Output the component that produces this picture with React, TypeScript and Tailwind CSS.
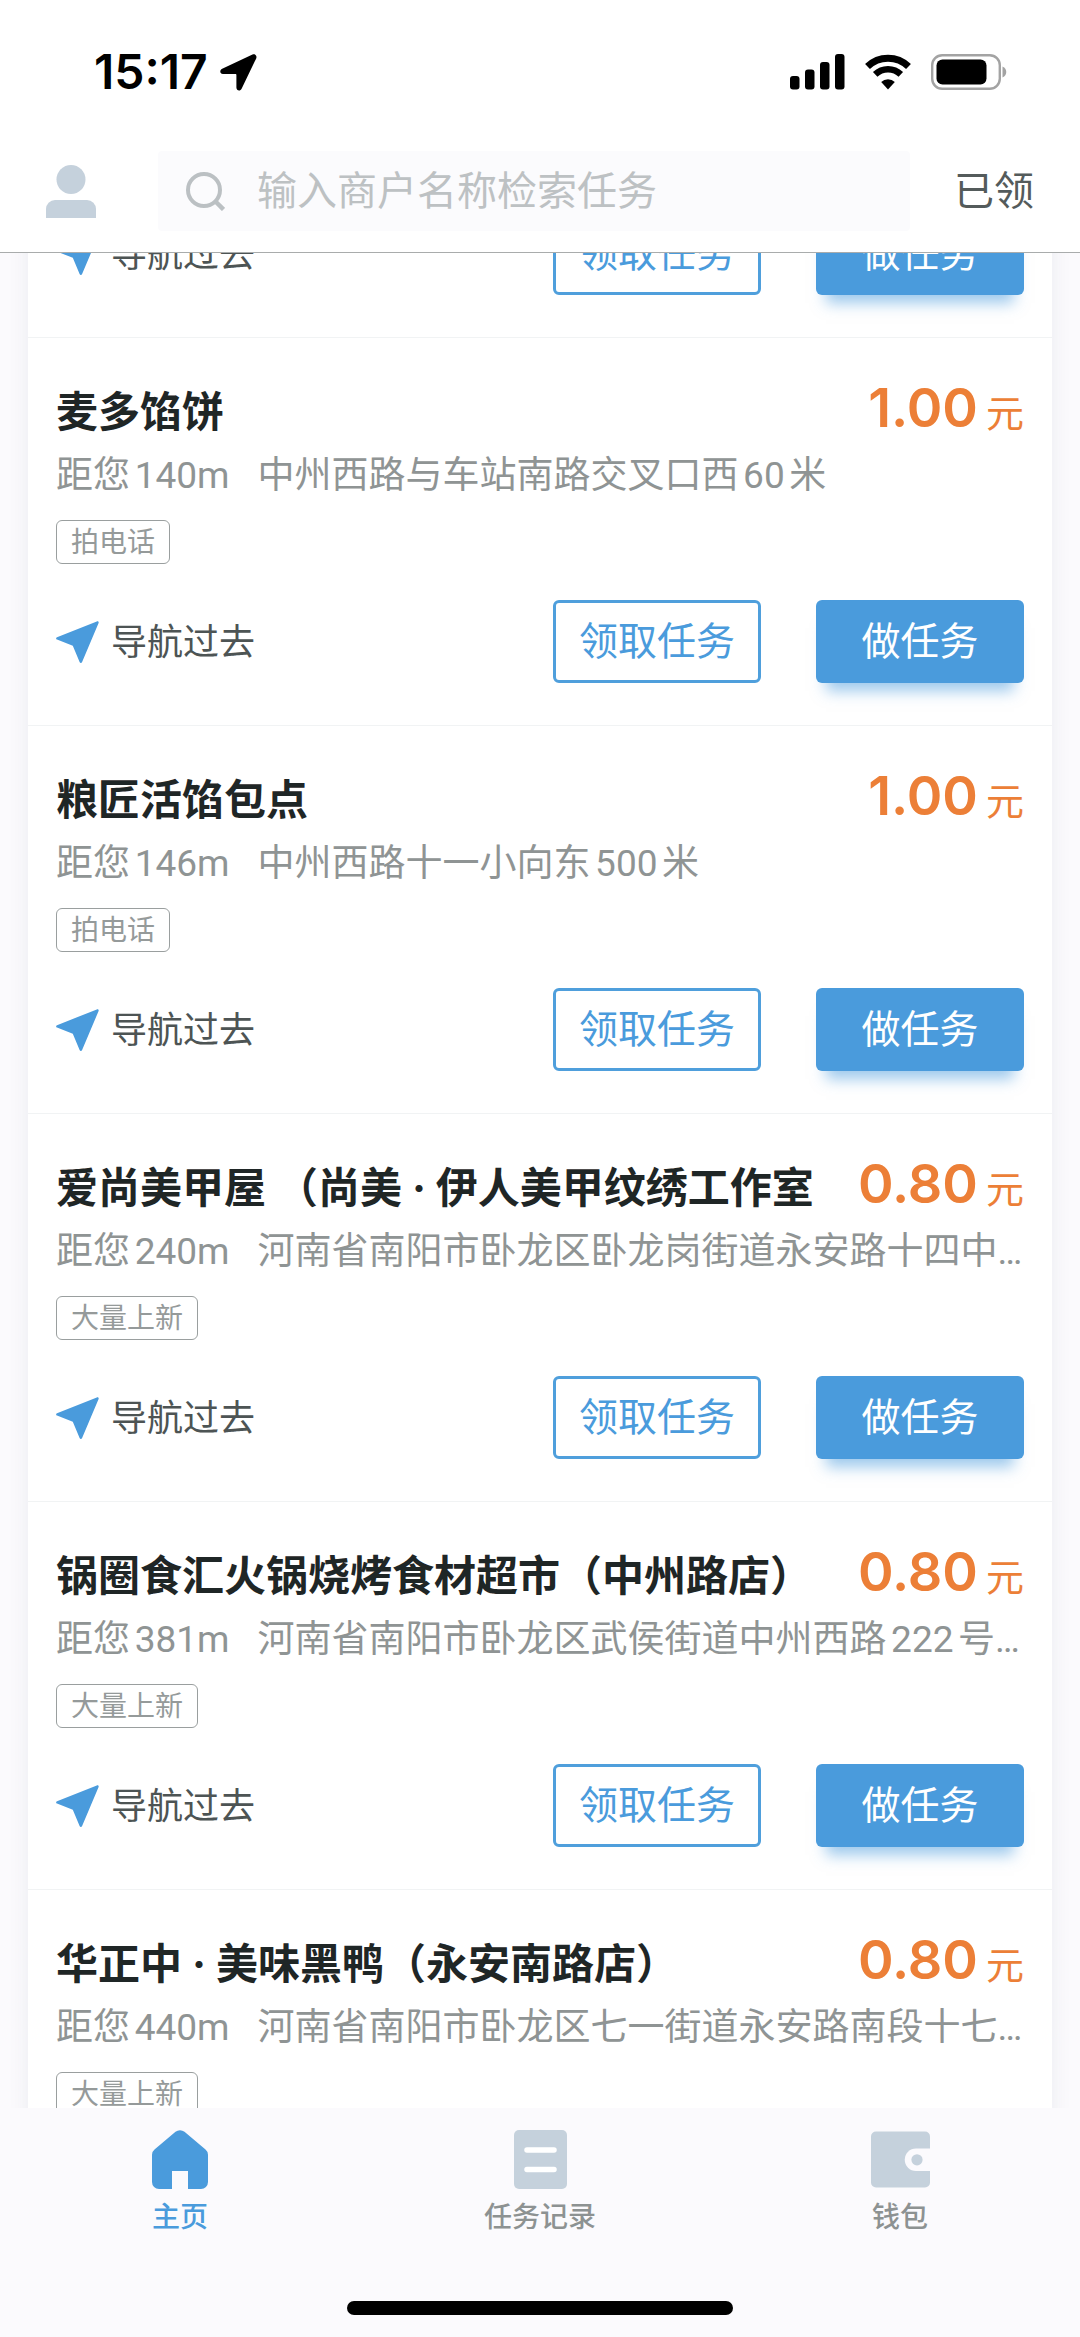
type Task = {
    name: string;
    price: string;
    distance: string;
    address: string;
    tag: string;
};

const tasks: Task[] = [
    { name: "麦多馅饼", price: "1.00", distance: "140m", address: "中州西路与车站南路交叉口西60米", tag: "拍电话" },
    { name: "粮匠活馅包点", price: "1.00", distance: "146m", address: "中州西路十一小向东500米", tag: "拍电话" },
    { name: "爱尚美甲屋 （尚美 · 伊人美甲纹绣工作室", price: "0.80", distance: "240m", address: "河南省南阳市卧龙区卧龙岗街道永安路十四中…", tag: "大量上新" },
    { name: "锅圈食汇火锅烧烤食材超市（中州路店）", price: "0.80", distance: "381m", address: "河南省南阳市卧龙区武侯街道中州西路222号…", tag: "大量上新" },
    { name: "华正中 · 美味黑鸭（永安南路店）", price: "0.80", distance: "440m", address: "河南省南阳市卧龙区七一街道永安路南段十七…", tag: "大量上新" },
];

function StatusBar() {
    return (
        <div className="flex items-center justify-between h-36 pl-[94px] pr-[73px] text-black">
            <div className="flex items-center gap-3">
                <span className="text-[48px] leading-none font-semibold">15:17</span>
                <svg width="37" height="37" viewBox="0 0 37 37" fill="currentColor">
                    <path d="M32.5.6 2.2 14.8C-.8 16.2-.1 20 3 20h12.4c.7 0 1 .3 1 1v12.6c0 3.300 3.900 4 5.200 1.200L36.200 4.400C37.300 1.900 35-.5 32.500.6Z" />
                </svg>
            </div>
            <div className="flex items-center gap-5">
                <svg width="55" height="36" viewBox="0 0 55 36" fill="currentColor">
                    <rect x="0" y="22" width="9.500" height="13.500" rx="3" />
                    <rect x="15" y="15.500" width="9.500" height="20" rx="3" />
                    <rect x="30" y="8" width="9.500" height="27.500" rx="3" />
                    <rect x="45" y="0" width="9.500" height="35.500" rx="3" />
                </svg>
                <svg width="46" height="36" viewBox="0 0 46 36" fill="none" stroke="currentColor" strokeWidth="7">
                    <path d="M2.500 12.500a29.500 29.500 0 0 1 41 0" />
                    <path d="M10.200 20.300a18.500 18.500 0 0 1 25.600 0" strokeWidth="6.500" />
                    <path d="M23 35.500 16.200 28a10 10 0 0 1 13.600 0Z" fill="currentColor" stroke="none" />
                </svg>
                <svg width="76" height="36" viewBox="0 0 76 36" fill="none">
                    <rect x="1.200" y="1.200" width="67.600" height="33.600" rx="10" stroke="#a3a3a3" strokeWidth="2.400" />
                    <rect x="5.500" y="5.500" width="50" height="25" rx="6" fill="#000" />
                    <path d="M71.500 12.500c5 1.800 5 9.200 0 11Z" fill="#a3a3a3" />
                </svg>
            </div>
        </div>
    );
}

function Header() {
    return (
        <header className="shrink-0 bg-white border-b border-[#a9acac]">
            <StatusBar />
            <div className="flex items-center pt-[7px] pb-[21px] px-[46px]">
                <button type="button" aria-label="我的" className="shrink-0">
                    <svg width="50" height="53" viewBox="0 0 50 53" fill="#c5d1dc">
                        <circle cx="25" cy="14.500" r="14.500" />
                        <path d="M0 53V44a9 9 0 0 1 9-9h32a9 9 0 0 1 9 9v9Z" />
                    </svg>
                </button>
                <label className="flex flex-1 items-center h-20 ml-[62px] mr-[44px] pl-7 bg-[#fbfbfd] rounded">
                    <svg width="39" height="39" viewBox="0 0 39 39" fill="none" stroke="#bbc0c3" strokeWidth="4" className="shrink-0">
                        <circle cx="18" cy="18" r="16" />
                        <path d="m29 29 8.500 8.500" strokeWidth="4.500" />
                    </svg>
                    <input
                        type="text"
                        aria-label="检索任务"
                        placeholder="输入商户名称检索任务"
                        className="flex-1 min-w-0 ml-8 bg-transparent text-[40px] leading-[56px] outline-none placeholder:text-[#bdc1c3]"
                    />
                </label>
                <button type="button" className="shrink-0 text-[40px] leading-[56px] text-[#545b5b]">已领</button>
            </div>
        </header>
    );
}

function TaskActions() {
    return (
        <div className="flex items-center">
            <button type="button" className="flex items-center gap-3 text-[36px] leading-[48px] text-[#4d5454]">
                <svg width="43" height="42" viewBox="0 0 43 42" fill="#4a9bdc">
                    <path d="M40.800.4 1 16.200c-1.200.5-1.200 2 0 2.400l15.800 6.200L23.600 41c.5 1.200 2 1.200 2.500 0L42.600 2C43 .8 42 0 40.800.4Z" />
                </svg>
                导航过去
            </button>
            <div className="flex gap-[55px] ml-auto text-[39px]">
                <button type="button" className="w-52 h-[83px] rounded-md border-[3px] border-[#4f9fdc] text-[#4a9bdc]">领取任务</button>
                <button type="button" className="w-52 h-[83px] rounded-md bg-[#4a9bdc] text-white shadow-[0_18px_14px_-10px_rgba(74,155,220,0.55)]">做任务</button>
            </div>
        </div>
    );
}

function TaskItem({ task, showActions }: { task: Task; showActions: boolean }) {
    return (
        <li className="px-7 pt-11 pb-[42px] border-b border-[#f1f3f4]">
            <div className="flex items-start justify-between h-[60px]">
                <h2 className="min-w-0 overflow-hidden whitespace-nowrap text-[42px] leading-[60px] font-bold text-[#1f2626]">{task.name}</h2>
                <p className="flex shrink-0 items-baseline gap-2 leading-[52px] text-[#ec7f37]">
                    <span className="text-[54px] font-semibold">{task.price}</span>
                    <span className="text-[38px]">元</span>
                </p>
            </div>
            <p className="flex gap-7 mt-3 -mr-2 font-[Roboto,'Noto_Sans_CJK_SC',sans-serif] text-[37px] leading-[44px] whitespace-nowrap text-[#8f9494]">
                <span className="shrink-0">距您{task.distance}</span>
                <span className="min-w-0 overflow-hidden">{task.address}</span>
            </p>
            <div className="flex mt-[22px]">
                <span className="h-11 px-3.5 rounded-md border border-[#9a9f9f] text-[28px] leading-[42px] text-[#959a9a]">{task.tag}</span>
            </div>
            {showActions && (
                <div className="mt-9">
                    <TaskActions />
                </div>
            )}
        </li>
    );
}

function TabBar() {
    return (
        <nav className="shrink-0 bg-[#fbfafd]">
            <div className="grid grid-cols-3 pt-[22px] text-[28px] leading-9 font-medium text-[#8d9292]">
                <a href="#home" className="flex flex-col items-center gap-2.5 text-[#4a9bdc]">
                    <svg width="56" height="59" viewBox="0 0 56 59" fill="#4a9bdc">
                        <path d="M23.500 1.800a7 7 0 0 1 9 0L53.500 19.500A7 7 0 0 1 56 25v27a7 7 0 0 1-7 7H36V41H20v18H7a7 7 0 0 1-7-7V25a7 7 0 0 1 2.500-5.500Z" />
                    </svg>
                    主页
                </a>
                <a href="#records" className="flex flex-col items-center gap-2.5">
                    <svg width="53" height="59" viewBox="0 0 53 59" fill="#c5d1dc">
                        <rect width="53" height="59" rx="5" />
                        <path d="M13 20h27M13 39.500h27" stroke="#fff" strokeWidth="5.500" strokeLinecap="round" />
                    </svg>
                    任务记录
                </a>
                <a href="#wallet" className="flex flex-col items-center gap-2.5">
                    <svg width="59" height="59" viewBox="0 0 59 59" fill="#c5d1dc">
                        <rect y="1.500" width="59" height="56" rx="5" />
                        <path d="M59 18.500H45a11.200 11.200 0 0 0 0 22.500h14Z" fill="#fbfafd" />
                        <circle cx="46" cy="29.800" r="5.600" />
                    </svg>
                    钱包
                </a>
            </div>
            <div className="w-[386px] h-3.5 mx-auto mt-[66px] mb-[22px] rounded-full bg-black" />
        </nav>
    );
}

export default function App() {
    return (
        <div className="flex flex-col h-screen overflow-hidden bg-[#fbfafd] font-[Inter,'Noto_Sans_CJK_SC',sans-serif] [text-autospace:normal]">
            <Header />
            <main className="flex-1 min-h-0 overflow-hidden px-7">
                <ul className="-mt-[41px] bg-white shadow-[0_0_20px_rgba(30,60,70,0.07)]">
                    {/* tail of the item scrolled under the header */}
                    <li className="px-7 pb-[42px] border-b border-[#f1f3f4]">
                        <TaskActions />
                    </li>
                    {tasks.map((task, i) => (
                        <TaskItem key={task.name} task={task} showActions={i < tasks.length - 1} />
                    ))}
                </ul>
            </main>
            <TabBar />
        </div>
    );
}
